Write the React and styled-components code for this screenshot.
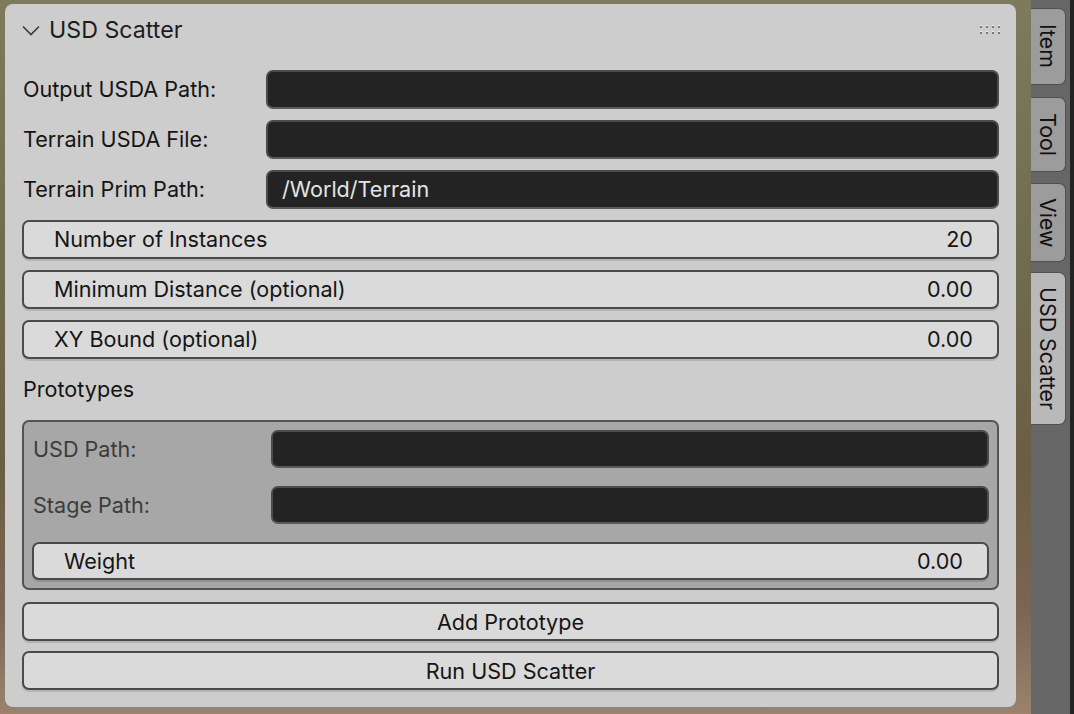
import React from "react"
import styled, { createGlobalStyle } from "styled-components"

const GlobalStyle = createGlobalStyle`
  html, body {
    margin: 0;
    padding: 0;
    width: 1074px;
    height: 714px;
    overflow: hidden;
  }
  body {
    font-family: Inter, "Noto Sans", "DejaVu Sans", sans-serif;
  }
`

const Screen = styled.div`
  display: flex;
  width: 1074px;
  height: 714px;
`

const Viewport = styled.div`
  flex: 1;
  display: flex;
  padding: 4px 15px 7px 5px;
  background:
    linear-gradient(180deg, #7d7a5d 0%, #6f6a4e 40%, #6b5d45 65%, #7a6552 85%, #9a826e 100%);
`

const Panel = styled.div`
  flex: 1;
  display: flex;
  flex-direction: column;
  background: #cdcdcd;
  border-radius: 8px;
  color: #151515;
`

const Header = styled.div`
  height: 52px;
  display: flex;
  align-items: center;
  padding: 0 14px 0 17px;
  box-sizing: border-box;
`

const HeaderTitle = styled.span`
  flex: 1;
  margin-left: 9px;
  font-size: 23.2px;
  color: #1c1c1c;
`

const Body = styled.div`
  display: flex;
  flex-direction: column;
  gap: 10px;
  padding: 13px 17px 0 17px;
`

const Row = styled.div`
  display: flex;
  align-items: center;
  height: ${p => p.$h || 40}px;
`

const Label = styled.div`
  width: ${p => p.$w || 243}px;
  flex-shrink: 0;
  padding-left: 1px;
  font-size: 21.6px;
  color: ${p => (p.$muted ? "#3c3c3c" : "#141414")};
  white-space: nowrap;
`

const TextField = styled.div`
  flex: 1;
  height: ${p => p.$h || 39}px;
  box-sizing: border-box;
  background: #232323;
  border: 2px solid #4b4b4b;
  border-bottom-color: #5a5a5a;
  border-radius: 7px;
  display: flex;
  align-items: center;
  padding: 0 14px;
  font-size: 21.6px;
  color: #e4e4e4;
`

const NumberField = styled.div`
  flex: 1;
  height: ${p => p.$h || 39}px;
  box-sizing: border-box;
  background: #dadada;
  border: 2px solid #4a4a4a;
  border-radius: 7px;
  box-shadow: 0 2px 0 rgba(0, 0, 0, 0.12);
  display: flex;
  align-items: center;
  justify-content: space-between;
  padding: 0 24px 0 30px;
  font-size: 21.6px;
  color: #151515;
`

const SectionTitle = styled.div`
  height: 40px;
  display: flex;
  align-items: center;
  padding-left: 1px;
  font-size: 21.6px;
  color: #141414;
`

const SubBox = styled.div`
  display: flex;
  flex-direction: column;
  gap: 18px;
  background: #a7a7a7;
  border: 2px solid #535353;
  border-radius: 7px;
  padding: 8px;
  margin-top: 1px;
`

const Button = styled.div`
  height: 39px;
  box-sizing: border-box;
  background: #dadada;
  border: 2px solid #4a4a4a;
  border-radius: 7px;
  box-shadow: 0 2px 0 rgba(0, 0, 0, 0.12);
  display: flex;
  align-items: center;
  justify-content: center;
  font-size: 21.6px;
  color: #151515;
  margin-top: ${p => p.$mt || 0}px;
`

const TabBar = styled.div`
  width: 43px;
  background: #666666;
  border-right: 4px solid #232323;
  box-sizing: border-box;
  display: flex;
  flex-direction: column;
  padding-top: 8px;
`

const Tab = styled.div`
  width: 35px;
  height: ${p => p.$h}px;
  margin-bottom: ${p => p.$gap}px;
  box-sizing: border-box;
  background: ${p => (p.$active ? "#b9b9b9" : "#9c9c9c")};
  border: 1px solid #505050;
  border-left: none;
  border-radius: 0 7px 7px 0;
  display: flex;
  align-items: center;
  justify-content: center;
  writing-mode: vertical-rl;
  font-size: 21.4px;
  color: #111;
`

const Chevron = () => (
  <svg width="18" height="11" viewBox="0 0 18 11">
    <path d="M1 1.5 L9 9.5 L17 1.5" fill="none" stroke="#3a3a3a" strokeWidth="1.6" />
  </svg>
)

const DragHandle = () => (
  <svg width="22" height="10" viewBox="0 0 22 10">
    {[0, 6, 12, 18].map(x =>
      [0, 6].map(y => (
        <g key={x + "-" + y}>
          <rect x={x} y={y} width="2" height="1" fill="#f2f2f2" />
          <rect x={x} y={y + 1} width="2" height="2" fill="#7a7a7a" />
        </g>
      ))
    )}
  </svg>
)

const tabs = [
  { name: "Item", h: 77, gap: 12 },
  { name: "Tool", h: 75, gap: 11 },
  { name: "View", h: 79, gap: 10 },
  { name: "USD Scatter", h: 153, gap: 0, active: true },
]

export default function App() {
  return (
    <Screen>
      <GlobalStyle />
      <Viewport>
        <Panel>
          <Header>
            <Chevron />
            <HeaderTitle>USD Scatter</HeaderTitle>
            <DragHandle />
          </Header>
          <Body>
            <Row>
              <Label>Output USDA Path:</Label>
              <TextField />
            </Row>
            <Row>
              <Label>Terrain USDA File:</Label>
              <TextField />
            </Row>
            <Row>
              <Label>Terrain Prim Path:</Label>
              <TextField>/World/Terrain</TextField>
            </Row>
            <Row>
              <NumberField>
                <span>Number of Instances</span>
                <span>20</span>
              </NumberField>
            </Row>
            <Row>
              <NumberField>
                <span>Minimum Distance (optional)</span>
                <span>0.00</span>
              </NumberField>
            </Row>
            <Row>
              <NumberField>
                <span>XY Bound (optional)</span>
                <span>0.00</span>
              </NumberField>
            </Row>
            <SectionTitle>Prototypes</SectionTitle>
            <SubBox>
              <Row $h={38}>
                <Label $w={238} $muted>USD Path:</Label>
                <TextField $h={38} />
              </Row>
              <Row $h={38}>
                <Label $w={238} $muted>Stage Path:</Label>
                <TextField $h={38} />
              </Row>
              <Row $h={38}>
                <NumberField $h={38}>
                  <span>Weight</span>
                  <span>0.00</span>
                </NumberField>
              </Row>
            </SubBox>
            <Button $mt={2}>Add Prototype</Button>
            <Button>Run USD Scatter</Button>
          </Body>
        </Panel>
      </Viewport>
      <TabBar>
        {tabs.map(t => (
          <Tab key={t.name} $h={t.h} $gap={t.gap} $active={t.active}>
            {t.name}
          </Tab>
        ))}
      </TabBar>
    </Screen>
  )
}
